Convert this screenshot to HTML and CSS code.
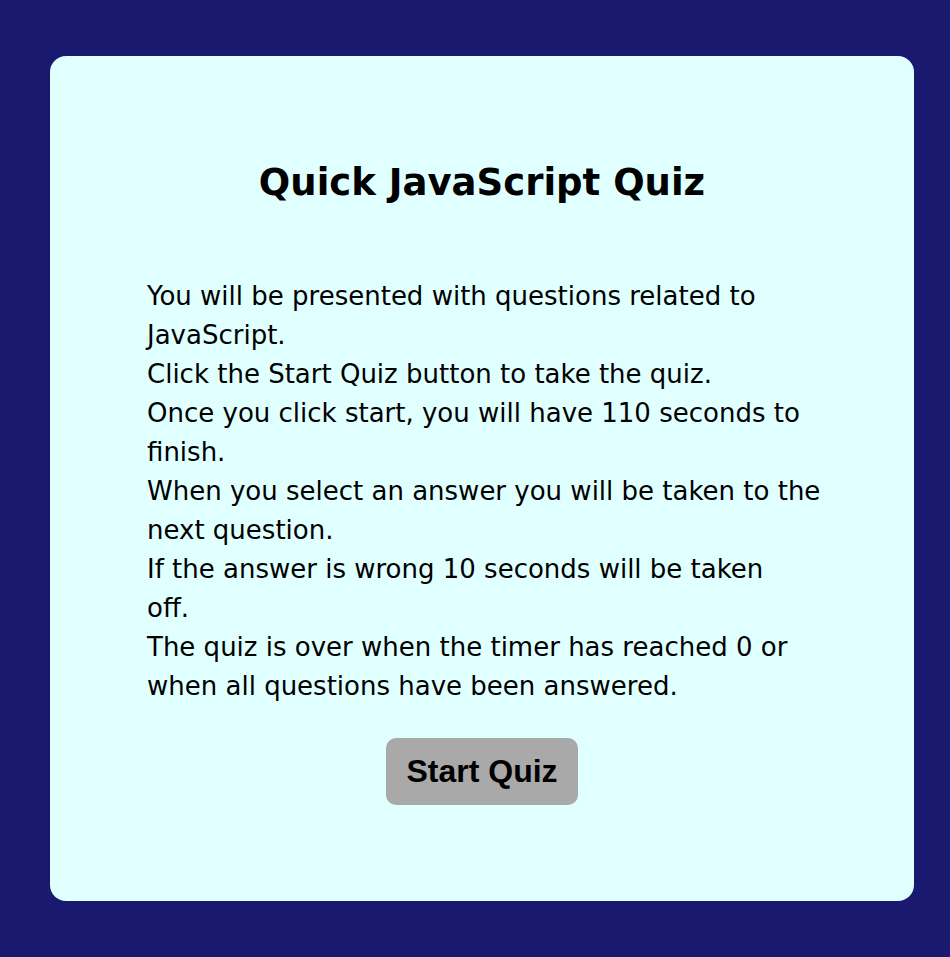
FILE: index.html
```html
<!DOCTYPE html>
<html lang="en">
<head>
<meta charset="utf-8">
<title>Quick JavaScript Quiz</title>
<link rel="stylesheet" href="styles.css">
</head>
<body>
<main class="page">
  <section class="card">
    <h1 class="title">Quick JavaScript Quiz</h1>
    <div class="intro">
      <p>You will be presented with questions related to<br>JavaScript.</p>
      <p>Click the Start Quiz button to take the quiz.</p>
      <p>Once you click start, you will have 110 seconds to<br>finish.</p>
      <p>When you select an answer you will be taken to the<br>next question.</p>
      <p>If the answer is wrong 10 seconds will be taken<br>off.</p>
      <p>The quiz is over when the timer has reached 0 or<br>when all questions have been answered.</p>
    </div>
    <button class="start-btn" type="button">Start Quiz</button>
  </section>
</main>
</body>
</html>
```
FILE: styles.css
```css
html, body {
  margin: 0;
  padding: 0;
}

body {
  background: #191970;
  font-family: "Comic Sans MS", "DejaVu Sans", sans-serif;
  color: #000;
}

.page {
  padding: 56px 36px 56px 50px;
}

.card {
  background: #e0ffff;
  border-radius: 16px;
  padding: 103px 97px 96px;
  display: flex;
  flex-direction: column;
  align-items: center;
}

.title {
  margin: 0;
  font-size: 37px;
  line-height: 48px;
  font-weight: bold;
  text-align: center;
}

.intro {
  margin-top: 70px;
  width: 100%;
  font-size: 26px;
  line-height: 39px;
  white-space: nowrap;
}

.intro p {
  margin: 0;
}

.start-btn {
  margin-top: 32px;
  background: #a9a9a9;
  border: none;
  border-radius: 10px;
  padding: 15px 20px;
  font-family: "Liberation Sans", Arial, sans-serif;
  font-size: 32px;
  font-weight: bold;
  line-height: 37px;
  color: #000;
  cursor: pointer;
}
```
